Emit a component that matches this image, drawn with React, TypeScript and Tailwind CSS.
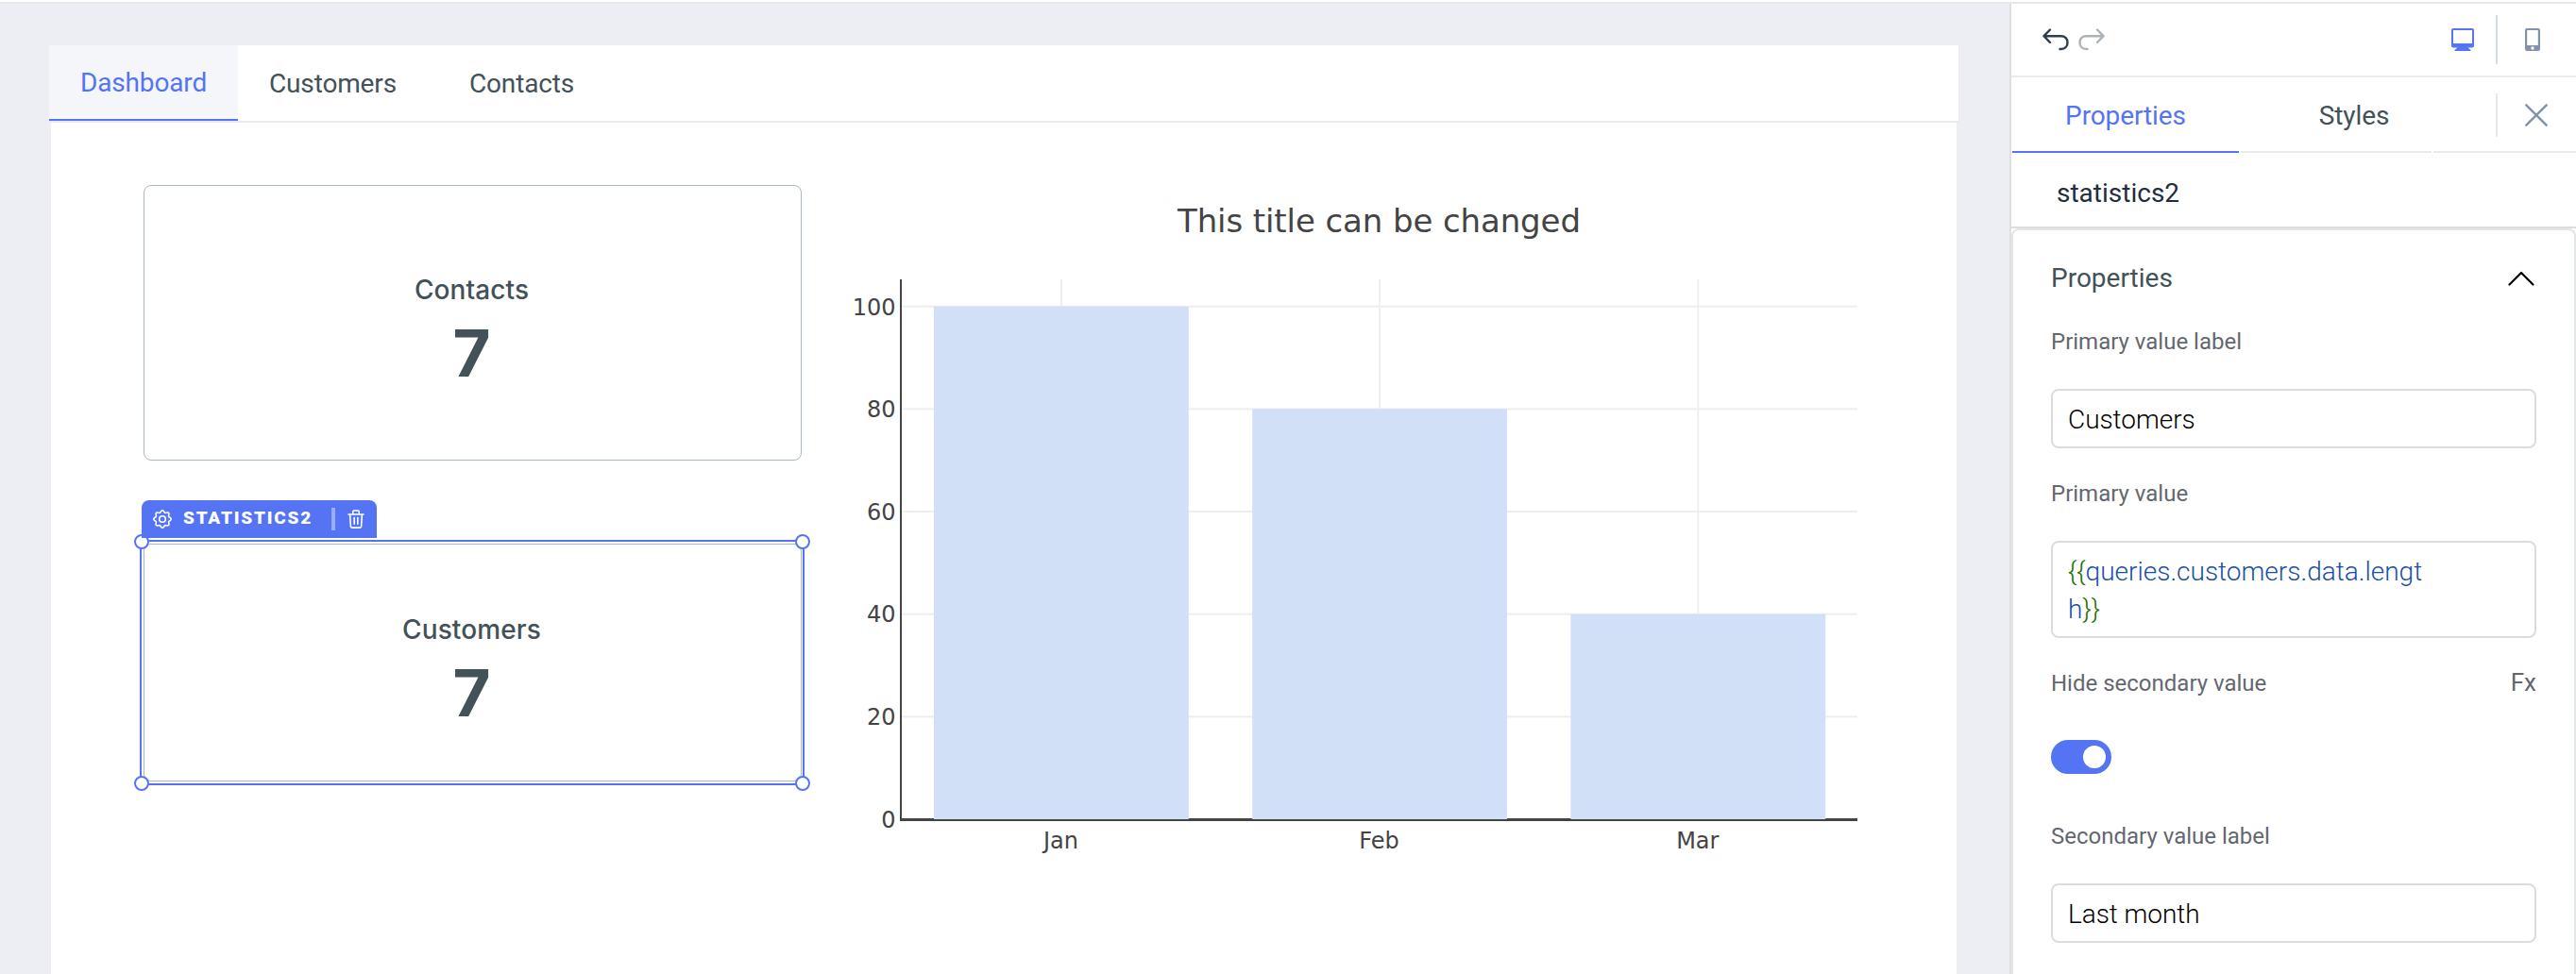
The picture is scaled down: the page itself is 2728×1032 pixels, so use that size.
import React, { useState } from "react";

const pageTabs = ["Dashboard", "Customers", "Contacts"];

const chartData = [
  { x: "Jan", y: 100 },
  { x: "Feb", y: 80 },
  { x: "Mar", y: 40 },
];

// plot area, in svg units
const PLOT = { left: 106, right: 1118, top: 100, zero: 672, unit: 5.433, step: 337.2, first: 274.9, bar: 269.8 };
const yTicks = [0, 20, 40, 60, 80, 100];

// eight rounded teeth around the centre
const gearPoints = Array.from({ length: 96 }, (_, i) => {
  const a = (i / 96) * Math.PI * 2;
  const r = 8.2 + Math.cos(a * 8);
  return `${(10 + r * Math.sin(a)).toFixed(2)},${(10 - r * Math.cos(a)).toFixed(2)}`;
}).join(" ");

function GearIcon() {
  return (
    <svg width="20" height="20" viewBox="0 0 20 20" fill="none" stroke="white" strokeWidth="1.6" strokeLinejoin="round">
      <polygon points={gearPoints} />
      <circle cx="10" cy="10" r="3.3" />
    </svg>
  );
}

function TrashIcon() {
  return (
    <svg width="18" height="20" viewBox="0 0 18 20" fill="none" stroke="white" strokeWidth="1.6" strokeLinecap="round" strokeLinejoin="round">
      <path d="M1 5H17M5.800 4.700V2Q5.800 1 6.800 1H11.200Q12.200 1 12.200 2V4.700M2.600 5 3.400 17.700Q3.500 19.100 4.900 19.100H13.100Q14.500 19.100 14.600 17.700L15.400 5M7.200 8.500V15.200M10.800 8.500V15.200" />
    </svg>
  );
}

function UndoIcon({ className }: { className?: string }) {
  return (
    <svg width="28" height="24" viewBox="0 0 28 24" className={className} fill="none" stroke="currentColor" strokeWidth="2.4" strokeLinecap="round" strokeLinejoin="round">
      <path d="M8 1.5 1.5 8.2 8 15M1.5 8.2H19.5C24 8.2 26.5 11 26.5 15S24 22 19.5 22H18.5" />
    </svg>
  );
}

function Statistic({ label, value }: { label: string; value: number }) {
  return (
    <div className="flex h-full flex-col items-center justify-center rounded-[8px] border border-[#aab6d0] pt-[19px] pr-[2px] font-[Inter,sans-serif] text-[#435159]">
      <div className="text-[28px] leading-[36px] font-medium tracking-[0.1px]">{label}</div>
      <div className="mt-[8px] text-[69px] leading-[82px] font-bold">{value}</div>
    </div>
  );
}

function Handle({ className }: { className: string }) {
  return <span className={`absolute size-4 rounded-full border-2 border-[#5474f4] bg-white ${className}`} />;
}

function BarChart() {
  const y = (v: number) => PLOT.zero - v * PLOT.unit;
  const x = (i: number) => PLOT.first + i * PLOT.step;
  return (
    <svg width="1223" height="760" viewBox="0 0 1223 760" className="shrink-0 font-['DejaVu_Sans',Verdana,sans-serif]" fill="#444">
      <text x="398" y="50" fontSize="34" textLength="427">This title can be changed</text>
      {chartData.map((d, i) => (
        <rect key={d.x} x={x(i) - 1} y={PLOT.top} width="2" height={PLOT.zero - PLOT.top} fill="#eee" />
      ))}
      {yTicks.slice(1).map((v) => (
        <rect key={v} x={PLOT.left} y={y(v) - 1} width={PLOT.right - PLOT.left} height="2" fill="#eee" />
      ))}
      <rect x="104" y="671" width="1014" height="3" />
      {chartData.map((d, i) => (
        <rect key={d.x} x={x(i) - PLOT.bar / 2} y={y(d.y)} width={PLOT.bar} height={d.y * PLOT.unit} fill="#d1dff7" />
      ))}
      <rect x="104" y={PLOT.top} width="2" height="574" />
      {yTicks.map((v) => (
        <text key={v} x="99.5" y={y(v) + 8.8} fontSize="24" textAnchor="end">{v}</text>
      ))}
      {chartData.map((d, i) => (
        <text key={d.x} x={x(i) - 0.5} y="703" fontSize="24" textAnchor="middle">{d.x}</text>
      ))}
    </svg>
  );
}

function Label({ children, className = "" }: { children: React.ReactNode; className?: string }) {
  return <label className={`block text-[24px] leading-[28px] text-[#64676f] ${className}`}>{children}</label>;
}

function TextField({ value, onChange }: { value: string; onChange: (v: string) => void }) {
  return (
    <input
      type="text"
      value={value}
      onChange={(e) => onChange(e.target.value)}
      className="block h-[63px] w-full rounded-[8px] border-2 border-[#dadcde] px-[16px] pt-[2px] text-[28px] font-light tracking-[-0.05px] text-black outline-none"
    />
  );
}

export default function App() {
  const [page, setPage] = useState("Dashboard");
  const [form, setForm] = useState({ label: "Customers", secondaryLabel: "Last month", hideSecondary: true });

  return (
    <div className="flex h-[1032px] w-[2728px] flex-col overflow-hidden bg-white pt-[2px] font-[Roboto,sans-serif]">
      <div className="h-[2px] shrink-0 bg-[#e6e8eb]" />
      <div className="flex min-h-0 flex-1">
        <main className="w-[2128px] shrink-0 bg-[#edeef3] pt-[44px] pl-[52px]">
          <nav className="flex h-[82px] w-[2022px] border-b-2 border-[#e8e9ee] bg-white">
            {pageTabs.map((t) => (
              <button
                key={t}
                onClick={() => setPage(t)}
                className={
                  t === page
                    ? "w-[200px] border-b-2 border-[#5474f4] bg-[#f4f6fa] pt-[2px] text-[28px] tracking-[-0.15px] text-[#5474f4]"
                    : "px-[33px] pt-[2px] text-[28px] tracking-[-0.15px] text-[#435159] not-last:mr-[11px]"
                }
              >
                {t}
              </button>
            ))}
          </nav>
          <div className="ml-[2px] flex h-[902px] w-[2018px] bg-white pt-[66px] pl-[98px]">
            <div className="w-[697px] shrink-0">
              <div className="h-[292px]">
                <Statistic label="Contacts" value={7} />
              </div>
              <div className="relative mt-[88px] h-[252px]">
                <Statistic label="Customers" value={7} />
                <div className="absolute -top-[4px] -right-[3px] -bottom-[4px] -left-[4px] border-2 border-[#5474f4]">
                  <Handle className="-top-[8px] -left-[8px]" />
                  <Handle className="-top-[8px] -right-[8px]" />
                  <Handle className="-bottom-[8px] -left-[8px]" />
                  <Handle className="-right-[8px] -bottom-[8px]" />
                </div>
                <div className="absolute -top-[46px] -left-[2px] flex h-[40px] w-[249px] items-center rounded-t-[8px] bg-[#5474f4] pl-[12px] text-white">
                  <GearIcon />
                  <span className="ml-[12px] w-[157px] pb-[3px] text-[19px] leading-none font-black tracking-[1.8px]">STATISTICS2</span>
                  <span className="mr-[13px] h-[24px] w-[4px] bg-[#9badf8]" />
                  <TrashIcon />
                </div>
              </div>
            </div>
            <BarChart />
          </div>
        </main>

        <aside className="flex w-[600px] flex-col border-l-2 border-[#dedfe0]">
          <div className="flex h-[78px] shrink-0 items-center border-b-2 border-[#ececec] pl-[33px]">
            <UndoIcon className="text-[#2c3e50]" />
            <UndoIcon className="ml-[10px] -scale-x-100 text-[#abb2b9]" />
            <svg width="24" height="24" viewBox="0 0 24 24" className="ml-[367px]" fill="#5474f4">
              <path fillRule="evenodd" d="M2 0H22Q24 0 24 2V18.500Q24 20.500 22 20.500H17.500L20.500 23V24H3.500V23L6.500 20.500H2Q0 20.500 0 18.500V2Q0 0 2 0ZM2 2V16H22V2Z" />
            </svg>
            <div className="ml-[23px] h-[52px] w-[2px] bg-[#d2ddec]" />
            <svg width="16" height="24" viewBox="0 0 16 24" className="ml-[29px]" fill="#8092ac">
              <path fillRule="evenodd" d="M2 0H14Q16 0 16 2V22Q16 24 14 24H2Q0 24 0 22V2Q0 0 2 0ZM2.200 2V18H13.800V2ZM8 19.300A1.700 1.700 0 1 0 8 22.700 1.700 1.700 0 1 0 8 19.300Z" />
            </svg>
          </div>

          <div className="flex h-[80px] shrink-0 gap-[2px] text-[28px] text-[#435159]">
            <button className="ml-px w-[240px] border-b-2 border-[#5474f4] pt-[3px] tracking-[-0.1px] text-[#5474f4]">Properties</button>
            <button className="w-[202px] border-b-2 border-[#e8e9ee] pt-[3px] pl-[38px] tracking-[-0.1px]">Styles</button>
            <div className="flex flex-1 items-center border-b-2 border-[#e8e9ee] pt-[2px] pl-[66px]">
              <div className="h-[46px] w-[2px] bg-[#e6e8ee]" />
              <svg width="24" height="24" viewBox="0 0 24 24" className="ml-[29px]" stroke="#8092ac" strokeWidth="2.400" strokeLinecap="round">
                <path d="M1.300 1.300 22.700 22.700M22.700 1.300 1.300 22.700" />
              </svg>
            </div>
          </div>

          <div className="flex h-[80px] shrink-0 items-center border-b-2 border-[#dcdddd] pt-[7px] pl-[48px] text-[28px] text-[#1f2d3d]">
            statistics2
          </div>

          <section className="flex-1 rounded-t-[8px] border-x-2 border-t-2 border-[#e4e5e5] px-[40px] pt-[30px]">
            <div className="flex h-[40px] items-center justify-between text-[28px] text-[#435159]">
              <span className="pt-[1px]">Properties</span>
              <svg width="28" height="16" viewBox="0 0 28 16" className="mt-[2px] mr-[2px]" fill="none" stroke="black" strokeWidth="2.200" strokeLinecap="round" strokeLinejoin="round">
                <path d="M1.500 14.500 14 2 26.500 14.500" />
              </svg>
            </div>

            <Label className="mt-[34px] mb-[36px]">Primary value label</Label>
            <TextField value={form.label} onChange={(label) => setForm((prev) => ({ ...prev, label }))} />

            <Label className="mt-[34px] mb-[36px]">Primary value</Label>
            <div className="h-[103px] rounded-[8px] border-2 border-[#dadcde] px-[16px] pt-[11px] text-[28px] leading-[40px] font-light text-[#1a4fa5]">
              <span className="text-[#1d6f05]">{"{{"}</span>queries.customers.data.lengt
              <br />h<span className="text-[#1d6f05]">{"}}"}</span>
            </div>

            <div className="mt-[34px] flex items-center justify-between">
              <Label>Hide secondary value</Label>
              <span className="pb-[2px] text-[26px] leading-[26px] text-[#64676f]">Fx</span>
            </div>
            <button
              onClick={() => setForm((prev) => ({ ...prev, hideSecondary: !prev.hideSecondary }))}
              className={`mt-[46px] flex h-[36px] w-[64px] items-center rounded-full px-[6px] ${form.hideSecondary ? "justify-end bg-[#5474f4]" : "bg-gray-300"}`}
            >
              <span className="size-6 rounded-full bg-white" />
            </button>

            <Label className="mt-[52px] mb-[36px]">Secondary value label</Label>
            <TextField
              value={form.secondaryLabel}
              onChange={(secondaryLabel) => setForm((prev) => ({ ...prev, secondaryLabel }))}
            />
          </section>
        </aside>
      </div>
    </div>
  );
}
